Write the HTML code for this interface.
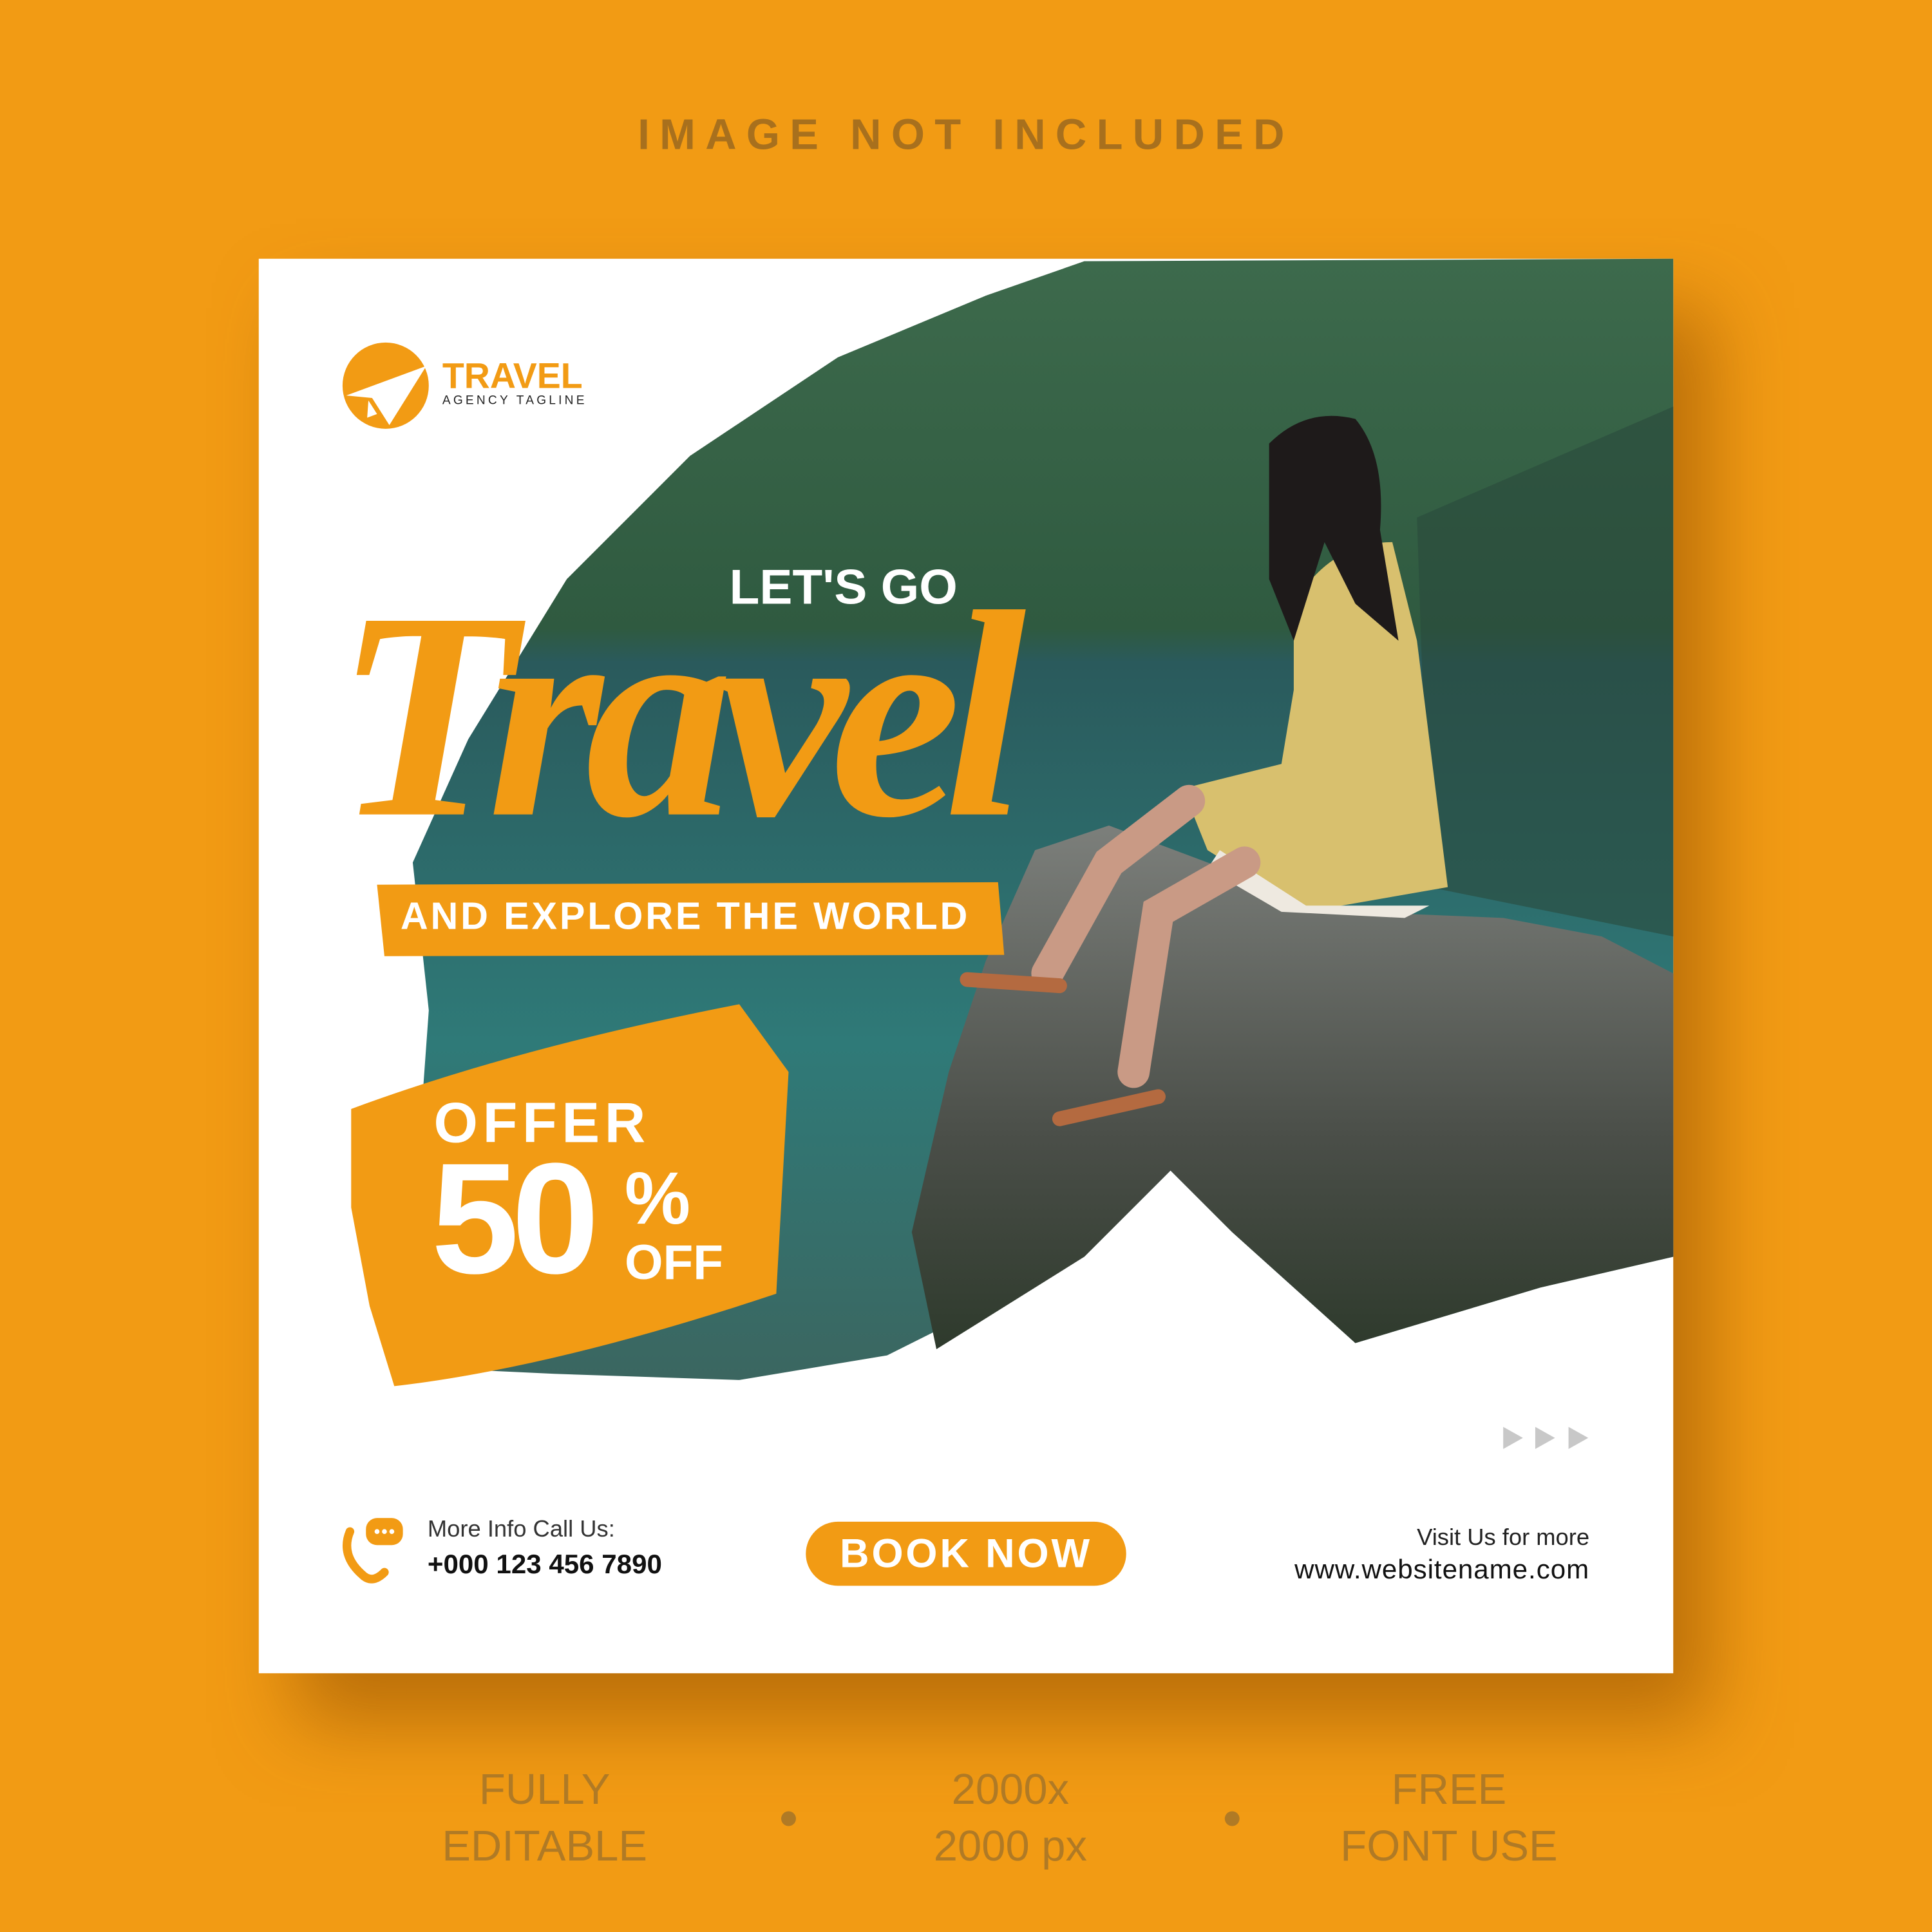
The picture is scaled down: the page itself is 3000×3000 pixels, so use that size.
<!DOCTYPE html>
<html><head><meta charset="utf-8"><style>
html,body{margin:0;padding:0;width:3000px;height:3000px;overflow:hidden;background:#f29b14}
#w{position:absolute;left:0;top:0;width:1568px;height:1568px;transform:scale(1.91327);transform-origin:0 0;font-family:"Liberation Sans",sans-serif}
.a{position:absolute;white-space:nowrap}
</style></head><body><div id="w">
<div class="a" style="left:0;width:1568px;top:90px;text-align:center;font-size:35px;letter-spacing:8px;color:#a8701d;font-weight:bold">IMAGE NOT INCLUDED</div>
<div class="a" style="left:210px;top:210px;width:1148px;height:1148px;background:#fff;box-shadow:30px 40px 60px rgba(140,75,0,.55)"></div>
<svg class="a" style="left:0;top:0" width="1568" height="1568" viewBox="0 0 1568 1568">
<defs>
<linearGradient id="bg" x1="0" y1="0" x2="0" y2="1">
<stop offset="0" stop-color="#3d6a4c"/><stop offset=".33" stop-color="#2f5a40"/><stop offset=".36" stop-color="#2a5a5c"/><stop offset=".7" stop-color="#2f7a78"/><stop offset="1" stop-color="#3b6660"/></linearGradient>
<linearGradient id="rk" x1="0" y1="0" x2="0" y2="1"><stop offset="0" stop-color="#7c7f7b"/><stop offset=".6" stop-color="#4a4e48"/><stop offset="1" stop-color="#2e3a2c"/></linearGradient>
</defs>
<polygon fill="url(#bg)" points="880,212 1358,210 1358,1020 1250,1045 1100,1090 1000,1000 950,950 880,1020 720,1100 600,1120 450,1115 345,1110 335,1000 348,820 335,700 380,600 460,470 560,370 680,290 800,240"/>
<polygon fill="#2a4a3c" opacity=".6" points="1150,420 1358,330 1358,760 1160,720"/>
<polygon fill="url(#rk)" points="760,1095 740,1000 770,870 800,780 840,690 900,670 980,700 1100,740 1220,745 1300,760 1358,790 1358,1020 1250,1045 1100,1090 1000,1000 950,950 880,1020"/>
<path fill="#d8c06e" d="M1050,490 Q1080,440 1130,440 L1150,520 L1175,720 L1060,740 L980,690 L960,640 L1040,620 L1050,560 Z"/>
<path fill="#eee9e0" d="M990,690 L1060,735 L1160,735 L1140,745 L1040,740 L980,705Z"/>
<path fill="#1e1a1a" d="M1030,360 Q1060,330 1100,340 Q1125,370 1120,430 L1135,520 L1100,490 L1075,440 L1050,520 L1030,470 Z"/>
<path fill="none" stroke="#c99a85" stroke-width="26" stroke-linecap="round" d="M965,650 L900,700 L850,790" />
<path fill="none" stroke="#c99a85" stroke-width="26" stroke-linecap="round" d="M1010,700 L940,740 L920,870"/>
<path fill="none" stroke="#b46a40" stroke-width="12" stroke-linecap="round" d="M785,795 L860,800 M860,908 L940,890"/>
<path fill="#f29b14" d="M285,900 Q420,850 600,815 L640,870 L630,1050 Q450,1110 320,1125 L300,1060 L285,980 Z"/>
<path fill="#f29b14" d="M306,718 L810,716 L815,775 L312,776 Z"/>
<polygon points="1220,1158 1236,1167 1220,1176" fill="#c8c8c8"/><polygon points="1246,1158 1262,1167 1246,1176" fill="#c8c8c8"/><polygon points="1273,1158 1289,1167 1273,1176" fill="#c8c8c8"/>
<circle cx="313" cy="313" r="35" fill="#f29b14"/>
<path fill="#fff" d="M281,321 L346,297 L316,345 L302,323 Z M299,325 L306,336 L298,339Z"/>
<circle cx="640" cy="1476" r="6" fill="#b07a25"/><circle cx="1000" cy="1476" r="6" fill="#b07a25"/>
<path fill="none" stroke="#f29b14" stroke-width="7" stroke-linecap="round" d="M284,1243 Q276,1262 294,1278 Q302,1286 312,1276"/>
<rect x="297" y="1232" width="30" height="22" rx="9" fill="#f29b14"/>
<circle cx="306" cy="1243" r="2" fill="#fff"/><circle cx="312" cy="1243" r="2" fill="#fff"/><circle cx="318" cy="1243" r="2" fill="#fff"/>
</svg>
<div class="a" style="left:359px;top:290px;font-size:29px;font-weight:bold;color:#f29b14">TRAVEL</div>
<div class="a" style="left:359px;top:320px;font-size:10px;letter-spacing:2.2px;color:#222">AGENCY TAGLINE</div>
<div class="a" style="left:592px;top:455px;font-size:40px;font-weight:bold;color:#fff">LET'S GO</div>
<div class="a" style="left:272px;top:440px;font-size:240px;line-height:280px;font-family:'Liberation Serif',serif;font-style:italic;font-weight:bold;color:#f29b14;letter-spacing:-14px">Travel</div>
<div class="a" style="left:325px;top:726px;font-size:31px;font-weight:bold;color:#fff;letter-spacing:2px">AND EXPLORE THE WORLD</div>
<div class="a" style="left:352px;top:884px;font-size:46px;font-weight:bold;color:#fff;letter-spacing:4px">OFFER</div>
<div class="a" style="left:350px;top:925px;font-size:128px;line-height:130px;font-weight:bold;color:#fff;letter-spacing:-6px">50</div>
<div class="a" style="left:507px;top:938px;font-size:60px;font-weight:bold;color:#fff">%</div>
<div class="a" style="left:507px;top:1003px;font-size:40px;font-weight:bold;color:#fff">OFF</div>
<div class="a" style="left:347px;top:1231px;font-size:19px;color:#333">More Info Call Us:</div>
<div class="a" style="left:347px;top:1257px;font-size:22px;color:#111;font-weight:bold">+000 123 456 7890</div>
<div class="a" style="left:654px;top:1235px;width:260px;height:52px;border-radius:26px;background:#f29b14;color:#fff;font-size:33px;font-weight:bold;text-align:center;line-height:52px;letter-spacing:2px">BOOK NOW</div>
<div class="a" style="right:278px;top:1238px;font-size:19px;color:#222">Visit Us for more</div>
<div class="a" style="right:278px;top:1261px;font-size:22px;color:#111;letter-spacing:0.5px">www.websitename.com</div>
<div class="a" style="left:342px;width:200px;text-align:center;top:1430px;font-size:35px;line-height:46px;color:#b07a25">FULLY<br>EDITABLE</div>
<div class="a" style="left:720px;width:200px;text-align:center;top:1430px;font-size:35px;line-height:46px;color:#b07a25">2000x<br>2000 px</div>
<div class="a" style="left:1076px;width:200px;text-align:center;top:1430px;font-size:35px;line-height:46px;color:#b07a25">FREE<br>FONT USE</div>
</div></body></html>
